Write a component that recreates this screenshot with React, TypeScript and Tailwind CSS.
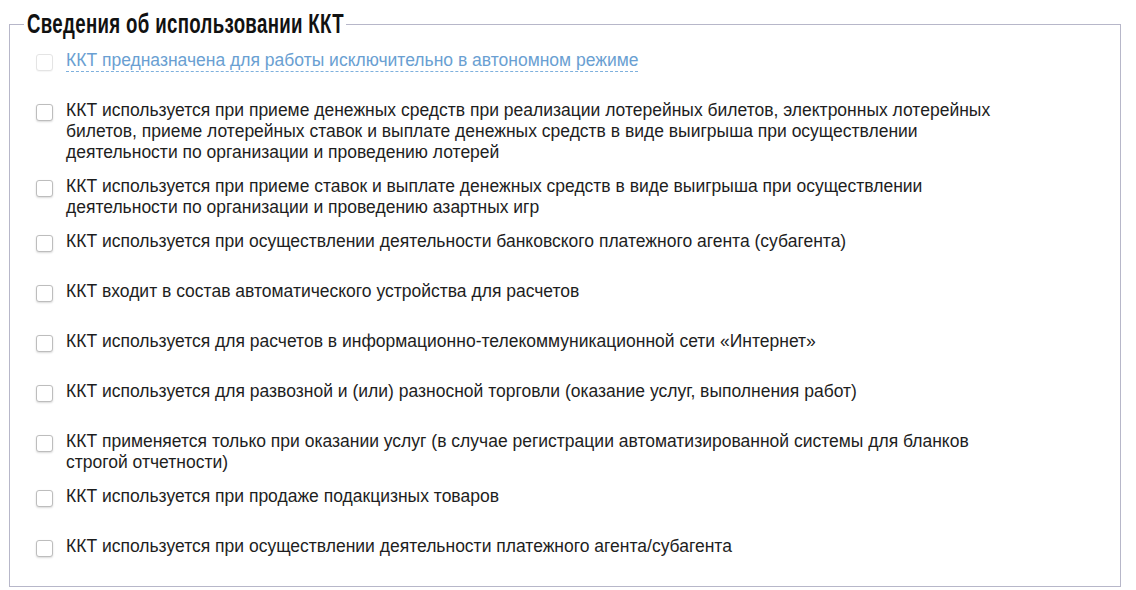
import React from "react";

const items: string[] = [
  "ККТ используется при приеме денежных средств при реализации лотерейных билетов, электронных лотерейных билетов, приеме лотерейных ставок и выплате денежных средств в виде выигрыша при осуществлении деятельности по организации и проведению лотерей",
  "ККТ используется при приеме ставок и выплате денежных средств в виде выигрыша при осуществлении деятельности по организации и проведению азартных игр",
  "ККТ используется при осуществлении деятельности банковского платежного агента (субагента)",
  "ККТ входит в состав автоматического устройства для расчетов",
  "ККТ используется для расчетов в информационно-телекоммуникационной сети «Интернет»",
  "ККТ используется для развозной и (или) разносной торговли (оказание услуг, выполнения работ)",
  "ККТ применяется только при оказании услуг (в случае регистрации автоматизированной системы для бланков строгой отчетности)",
  "ККТ используется при продаже подакцизных товаров",
  "ККТ используется при осуществлении деятельности платежного агента/субагента",
];

function Box({ disabled }: { disabled?: boolean }) {
  return (
    <span
      className={
        "mt-[4px] block h-[17px] w-[17px] shrink-0 rounded-[3px] border bg-white " +
        (disabled
          ? "border-[#e4e4e4] shadow-[0_1px_1px_rgba(0,0,0,0.04)]"
          : "border-[#bdbdbd] shadow-[0_1px_2px_rgba(0,0,0,0.15)]")
      }
    />
  );
}

export default function App() {
  return (
    <div className="min-h-[590px] bg-white pt-[9px] pl-[9px]" style={{ fontFamily: '"Liberation Sans", Arial, sans-serif' }}>
      <fieldset className="m-0 w-[1112px] border border-[#b7b7c9] p-0">
        <legend className="ml-[14px] w-[322px] overflow-visible px-[3px] text-[27px] leading-[30px] font-bold whitespace-nowrap text-[#111]">
          <span className="inline-block origin-left scale-x-[0.69] tracking-[0.5px]">Сведения об использовании ККТ</span>
        </legend>
        <div className="pt-[11px] pl-[26px]">
          <div className="mb-[13px] flex min-h-[37px] items-start gap-[13px]">
            <Box disabled />
            <span className="w-[940px] text-[17.5px] leading-[21px] text-[#6a9fd2]">
              <span className="border-b border-dashed border-[#7eb0dd] pb-[1px]">
                ККТ предназначена для работы исключительно в автономном режиме
              </span>
            </span>
          </div>
          {items.map((t, i) => (
            <div key={i} className="mb-[13px] flex min-h-[37px] items-start gap-[13px]">
              <Box />
              <span className="w-[940px] text-[17.5px] leading-[21px] text-[#1e1e1e]">{t}</span>
            </div>
          ))}
        </div>
      </fieldset>
    </div>
  );
}
